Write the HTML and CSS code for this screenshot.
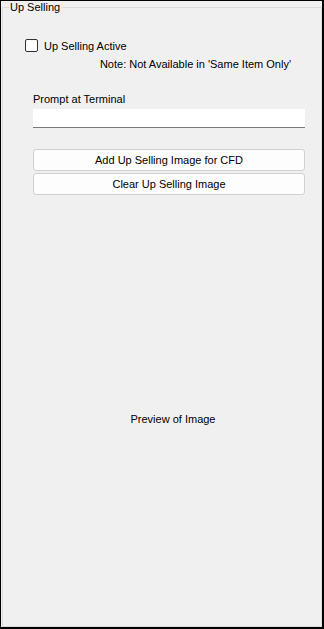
FILE: index.html
```html
<!DOCTYPE html>
<html>
<head>
<meta charset="utf-8">
<link rel="stylesheet" href="styles.css">
</head>
<body>
<div class="frame">
  <fieldset class="group">
    <legend class="group-title">Up Selling</legend>
    <div class="content">
      <label class="check-row">
        <span class="checkbox"></span>
        <span class="check-label">Up Selling Active</span>
      </label>
      <div class="note">Note: Not Available in 'Same Item Only'</div>
      <div class="prompt-label">Prompt at Terminal</div>
      <div class="textbox"></div>
      <div class="buttons">
        <div class="btn">Add Up Selling Image for CFD</div>
        <div class="btn">Clear Up Selling Image</div>
      </div>
      <div class="preview">Preview of Image</div>
    </div>
  </fieldset>
</div>
</body>
</html>
```
FILE: styles.css
```css
html, body {
  margin: 0;
  padding: 0;
}
body {
  font-family: "Liberation Sans", Arial, sans-serif;
  font-size: 11px;
  color: #000;
  background: #f0f0f0;
}
.frame {
  width: 324px;
  height: 629px;
  box-sizing: border-box;
  border-style: solid;
  border-color: #000;
  border-width: 1px 2px 2px 1px;
  background: #f0f0f0;
  display: flex;
}
.group {
  flex: 1;
  margin: 0 0 0 1px;
  padding: 0;
  border: 1px solid #dcdcdc;
  min-width: 0;
  display: flex;
  flex-direction: column;
}
.group-title {
  margin-left: 6px;
  padding: 0 2px 0 1px;
  line-height: 12px;
  height: 12px;
}
.content {
  flex: 1;
  display: flex;
  flex-direction: column;
  padding: 0 16px 0 30px;
}
.check-row {
  display: flex;
  align-items: center;
  margin-top: 26px;
  margin-left: -8px;
  height: 13px;
}
.checkbox {
  width: 11px;
  height: 11px;
  border: 1px solid #333;
  border-radius: 2px;
  background: #fff;
}
.check-label {
  margin-left: 6px;
}
.note {
  text-align: right;
  margin-top: 5px;
  margin-right: 14px;
  line-height: 14px;
}
.prompt-label {
  margin-top: 21px;
  line-height: 14px;
}
.textbox {
  margin-top: 3px;
  height: 18px;
  background: #fff;
  border-bottom: 1px solid #7a7a7a;
}
.buttons {
  margin-top: 21px;
  display: flex;
  flex-direction: column;
  gap: 2px;
}
.btn {
  height: 20px;
  line-height: 20px;
  text-align: center;
  background: #fdfdfd;
  border: 1px solid #d0d0d0;
  border-radius: 3px;
}
.preview {
  flex: 1;
  display: flex;
  align-items: center;
  justify-content: center;
  padding-top: 16px;
  padding-left: 8px;
}
```
